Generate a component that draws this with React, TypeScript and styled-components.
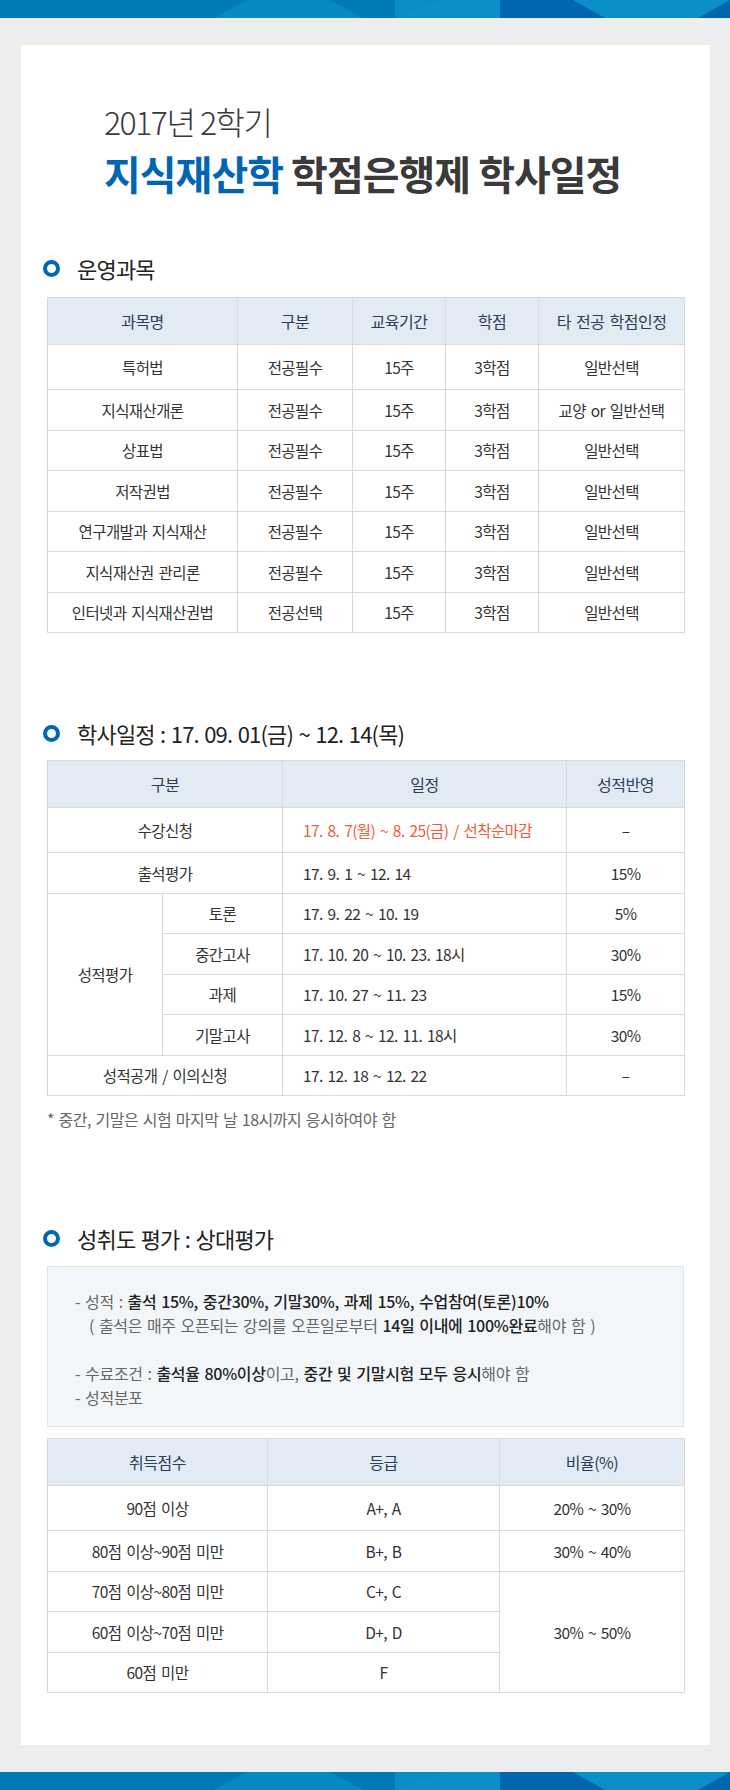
import React from 'react';
import styled, { createGlobalStyle } from 'styled-components';

const GlobalStyle = createGlobalStyle`
  body {
    margin: 0;
    background: #ecedef;
    font-family: 'Noto Sans CJK KR', 'Noto Sans', sans-serif;
    color: #333;
  }
`;

const Page = styled.div`
  width: 730px;
`;

const BandSvg = styled.svg`
  display: block;
  width: 730px;
  height: 18px;
`;

const Card = styled.main`
  margin: 27px 20px 27px 21px;
  padding: 56px 26px 52px;
  background: #fff;
`;

const TitleBlock = styled.header`
  padding-left: 57px;
  margin-bottom: 60px;
`;

const TitleSub = styled.div`
  font-size: 32px;
  line-height: 40px;
  font-weight: 300;
  letter-spacing: -1.5px;
  color: #3a3a3a;
`;

const TitleMain = styled.h1`
  margin: 9px 0 0;
  font-size: 40px;
  line-height: 46px;
  font-weight: 700;
  letter-spacing: -1px;
  color: #3a3a3a;
`;

const Accent = styled.span`
  color: #0066b3;
`;

const Section = styled.section<{ $top: number }>`
  margin-top: ${(p) => p.$top}px;
`;

const SectionTitle = styled.h2<{ $below?: number }>`
  display: flex;
  align-items: center;
  gap: 17px;
  height: 24px;
  margin: 0 0 ${(p) => p.$below ?? 17}px -4px;
  font-size: 22px;
  font-weight: 400;
  letter-spacing: -0.8px;
  word-spacing: 1.2px;
  color: #222;
`;

const Ring = styled.span`
  flex: none;
  width: 17px;
  height: 17px;
  box-sizing: border-box;
  border: 4.5px solid #0068b3;
  border-radius: 50%;
`;

const Table = styled.table`
  width: 637px;
  border-collapse: collapse;
  table-layout: fixed;
  font-size: 15.5px;
  letter-spacing: -0.6px;
  word-spacing: 2px;
  color: #333;

  & tbody tr:first-child > td {
    height: 44px;
  }
`;

const Th = styled.th`
  height: 46px;
  padding: 0;
  background: #e2ebf4;
  border: 1px solid #dadada;
  font-size: 16px;
  font-weight: 400;
  letter-spacing: -0.5px;
  color: #2b3d58;
  text-align: center;
`;

const Td = styled.td<{ $left?: boolean; $accent?: boolean }>`
  height: 39.5px;
  padding: 0 ${(p) => (p.$left ? '20px' : '0')};
  border: 1px solid #dadada;
  text-align: ${(p) => (p.$left ? 'left' : 'center')};
  color: ${(p) => (p.$accent ? '#ef5b3b' : '#333')};
`;

const Footnote = styled.p`
  margin: 13px 0 0;
  font-size: 16px;
  line-height: 20px;
  letter-spacing: -0.5px;
  word-spacing: 1.5px;
  color: #666;
`;

const NoteBox = styled.div`
  margin-bottom: 11px;
  padding: 22px 27px 17px;
  background: #f3f6f9;
  border: 1px solid #e1e5ea;
  font-size: 16px;
  line-height: 24px;
  letter-spacing: -0.3px;
  word-spacing: 1.5px;
  color: #666;
`;

const NoteLine = styled.p<{ $indent?: boolean }>`
  margin: 0;
  min-height: 24px;
  padding-left: ${(p) => (p.$indent ? '14px' : '0')};
`;

const Strong = styled.span`
  font-weight: 500;
  color: #222;
`;

const Band = () => (
  <BandSvg viewBox="0 0 730 18" preserveAspectRatio="none">
    <rect width="730" height="18" fill="#0079b8" />
    <polygon points="214,18 247,0 330,0 363,18" fill="#0789c5" />
    <rect x="395" width="105" height="18" fill="#0a8cc6" />
    <polygon points="395,18 445,0 500,0 500,18" fill="#0d90c9" />
    <rect x="500" width="230" height="18" fill="#0066ae" />
    <polygon points="573,0 730,0 698,18 605,18" fill="#0a8fc8" />
  </BandSvg>
);

const courses = [
  ['특허법', '전공필수', '일반선택'],
  ['지식재산개론', '전공필수', '교양 or 일반선택'],
  ['상표법', '전공필수', '일반선택'],
  ['저작권법', '전공필수', '일반선택'],
  ['연구개발과 지식재산', '전공필수', '일반선택'],
  ['지식재산권 관리론', '전공필수', '일반선택'],
  ['인터넷과 지식재산권법', '전공선택', '일반선택'],
];

const exams = [
  ['토론', '17. 9. 22 ~ 10. 19', '5%'],
  ['중간고사', '17. 10. 20 ~ 10. 23. 18시', '30%'],
  ['과제', '17. 10. 27 ~ 11. 23', '15%'],
  ['기말고사', '17. 12. 8 ~ 12. 11. 18시', '30%'],
];

const App: React.FC = () => {
  return (
    <Page>
      <GlobalStyle />
      <Band />
      <Card>
        <TitleBlock>
          <TitleSub>2017년 2학기</TitleSub>
          <TitleMain>
            <Accent>지식재산학</Accent> 학점은행제 학사일정
          </TitleMain>
        </TitleBlock>

        <Section $top={0}>
          <SectionTitle>
            <Ring />
            운영과목
          </SectionTitle>
          <Table>
            <colgroup>
              <col style={{ width: 190 }} />
              <col style={{ width: 115 }} />
              <col style={{ width: 93 }} />
              <col style={{ width: 93 }} />
              <col style={{ width: 146 }} />
            </colgroup>
            <thead>
              <tr>
                <Th>과목명</Th>
                <Th>구분</Th>
                <Th>교육기간</Th>
                <Th>학점</Th>
                <Th>타 전공 학점인정</Th>
              </tr>
            </thead>
            <tbody>
              {courses.map(([name, kind, credit]) => (
                <tr key={name}>
                  <Td>{name}</Td>
                  <Td>{kind}</Td>
                  <Td>15주</Td>
                  <Td>3학점</Td>
                  <Td>{credit}</Td>
                </tr>
              ))}
            </tbody>
          </Table>
        </Section>

        <Section $top={88}>
          <SectionTitle $below={15}>
            <Ring />
            학사일정 : 17. 09. 01(금) ~ 12. 14(목)
          </SectionTitle>
          <Table>
            <colgroup>
              <col style={{ width: 115 }} />
              <col style={{ width: 120 }} />
              <col style={{ width: 284 }} />
              <col style={{ width: 118 }} />
            </colgroup>
            <thead>
              <tr>
                <Th colSpan={2}>구분</Th>
                <Th>일정</Th>
                <Th>성적반영</Th>
              </tr>
            </thead>
            <tbody>
              <tr>
                <Td colSpan={2}>수강신청</Td>
                <Td $left $accent>
                  17. 8. 7(월) ~ 8. 25(금) / 선착순마감
                </Td>
                <Td>–</Td>
              </tr>
              <tr>
                <Td colSpan={2}>출석평가</Td>
                <Td $left>17. 9. 1 ~ 12. 14</Td>
                <Td>15%</Td>
              </tr>
              {exams.map(([name, date, rate], i) => (
                <tr key={name}>
                  {i === 0 && <Td rowSpan={4}>성적평가</Td>}
                  <Td>{name}</Td>
                  <Td $left>{date}</Td>
                  <Td>{rate}</Td>
                </tr>
              ))}
              <tr>
                <Td colSpan={2}>성적공개 / 이의신청</Td>
                <Td $left>17. 12. 18 ~ 12. 22</Td>
                <Td>–</Td>
              </tr>
            </tbody>
          </Table>
          <Footnote>* 중간, 기말은 시험 마지막 날 18시까지 응시하여야 함</Footnote>
        </Section>

        <Section $top={97}>
          <SectionTitle $below={16}>
            <Ring />
            성취도 평가 : 상대평가
          </SectionTitle>
          <NoteBox>
            <NoteLine>
              - 성적 : <Strong>출석 15%, 중간30%, 기말30%, 과제 15%, 수업참여(토론)10%</Strong>
            </NoteLine>
            <NoteLine $indent>
              ( 출석은 매주 오픈되는 강의를 오픈일로부터 <Strong>14일 이내에 100%완료</Strong>해야 함 )
            </NoteLine>
            <NoteLine />
            <NoteLine>
              - 수료조건 : <Strong>출석율 80%이상</Strong>이고, <Strong>중간 및 기말시험 모두 응시</Strong>해야 함
            </NoteLine>
            <NoteLine>- 성적분포</NoteLine>
          </NoteBox>
          <Table>
            <colgroup>
              <col style={{ width: 220 }} />
              <col style={{ width: 232 }} />
              <col style={{ width: 185 }} />
            </colgroup>
            <thead>
              <tr>
                <Th>취득점수</Th>
                <Th>등급</Th>
                <Th>비율(%)</Th>
              </tr>
            </thead>
            <tbody>
              <tr>
                <Td>90점 이상</Td>
                <Td>A+, A</Td>
                <Td>20% ~ 30%</Td>
              </tr>
              <tr>
                <Td>80점 이상~90점 미만</Td>
                <Td>B+, B</Td>
                <Td>30% ~ 40%</Td>
              </tr>
              <tr>
                <Td>70점 이상~80점 미만</Td>
                <Td>C+, C</Td>
                <Td rowSpan={3}>30% ~ 50%</Td>
              </tr>
              <tr>
                <Td>60점 이상~70점 미만</Td>
                <Td>D+, D</Td>
              </tr>
              <tr>
                <Td>60점 미만</Td>
                <Td>F</Td>
              </tr>
            </tbody>
          </Table>
        </Section>
      </Card>
      <Band />
    </Page>
  );
};

export default App;
